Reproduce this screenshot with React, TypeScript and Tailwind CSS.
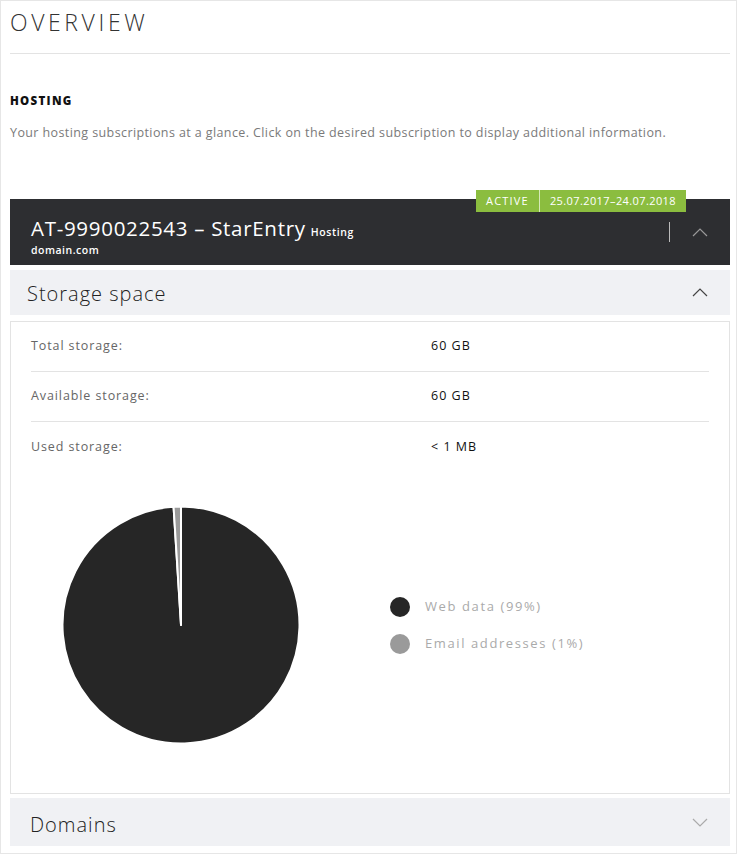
import React from "react";

function Pie() {
  const cx = 120, cy = 120, r = 118.5;
  const pt = (deg: number) => {
    const a = ((deg - 90) * Math.PI) / 180;
    return [cx + r * Math.cos(a), cy + r * Math.sin(a)];
  };
  const [x1, y1] = pt(0);
  const [x2, y2] = pt(356.4);
  const dark = `M${cx},${cy} L${x1},${y1} A${r},${r} 0 1 1 ${x2},${y2} Z`;
  const gray = `M${cx},${cy} L${x2},${y2} A${r},${r} 0 0 1 ${x1},${y1} Z`;
  return (
    <svg width="240" height="240" viewBox="0 0 240 240">
      <path d={dark} fill="#262626" stroke="#ffffff" strokeWidth="2" strokeLinejoin="round" />
      <path d={gray} fill="#9a9a9a" stroke="#ffffff" strokeWidth="2" strokeLinejoin="round" />
    </svg>
  );
}

function ChevronUp({ color }: { color: string }) {
  return (
    <svg width="16" height="9" viewBox="0 0 16 9" fill="none">
      <path d="M1 8 L8 1 L15 8" stroke={color} strokeWidth="1.2" />
    </svg>
  );
}
function ChevronDown({ color }: { color: string }) {
  return (
    <svg width="16" height="9" viewBox="0 0 16 9" fill="none">
      <path d="M1 1 L8 8 L15 1" stroke={color} strokeWidth="1.2" />
    </svg>
  );
}

export default function App() {
  const font = { fontFamily: "'Open Sans', Lato, sans-serif" };
  return (
    <div
      className="w-[737px] h-[854px] border border-[#e6e6e6] bg-white pl-[9px] pr-[6px] overflow-hidden"
      style={font}
    >
      <div className="pt-[7px] h-[53px] border-b border-[#e3e3e3]">
        <h1 className="text-[23px] font-light tracking-[3.6px] text-[#333] leading-[28px]">OVERVIEW</h1>
      </div>
      <div className="pt-[39px]">
        <h2 className="text-[11.5px] font-extrabold tracking-[1.3px] text-[#111] leading-[16px]">HOSTING</h2>
        <p className="mt-[16px] text-[12.5px] text-[#7a7a7a] leading-[16px] tracking-[0.4px]">
          Your hosting subscriptions at a glance. Click on the desired subscription to display additional information.
        </p>
      </div>

      <div className="mt-[58px] relative">
        <div className="absolute right-[44px] top-[-9px] flex h-[22px] bg-[#8bbd3f] text-white text-[11px] tracking-[0.4px]">
          <span className="px-[10px] flex items-center border-r border-[#d6e9b8] tracking-[1.2px]">ACTIVE</span>
          <span className="px-[10px] flex items-center">25.07.2017–24.07.2018</span>
        </div>
        <div className="h-[66px] bg-[#2d2e31] flex items-center pl-[21px] pr-[22px]">
          <div className="flex-1 pt-[10px]">
            <div className="text-white leading-[22px]">
              <span className="text-[20.5px] font-normal tracking-[0.7px]">AT-9990022543 – StarEntry</span>
              <span className="text-[10.5px] font-semibold ml-[5px] tracking-[0.6px]">Hosting</span>
            </div>
            <div className="text-white text-[10.5px] font-semibold leading-[14px] tracking-[0.5px]">domain.com</div>
          </div>
          <div className="w-px h-[20px] bg-[#bbbbbb] mr-[22px]" />
          <ChevronUp color="#9a9a9a" />
        </div>
      </div>

      <div className="mt-[5px] h-[45px] bg-[#f0f1f4] flex items-center pl-[17px] pr-[22px]">
        <span className="flex-1 text-[20px] font-light text-[#222] tracking-[1px] pt-[2px]">Storage space</span>
        <ChevronUp color="#444" />
      </div>

      <div className="mt-[6px] h-[473px] border border-[#e3e3e3] px-[20px]">
        {[
          ["Total storage:", "60 GB"],
          ["Available storage:", "60 GB"],
          ["Used storage:", "< 1 MB"],
        ].map(([k, v], i) => (
          <div
            key={k}
            className={`h-[50px] flex items-center ${i < 2 ? "border-b border-[#e3e3e3]" : ""}`}
          >
            <span className="w-[400px] text-[12.5px] text-[#666] tracking-[0.9px]">{k}</span>
            <span className="text-[12.5px] text-[#111] tracking-[1px]">{v}</span>
          </div>
        ))}
        <div className="flex items-center mt-[33px]">
          <div className="ml-[30px]">
            <Pie />
          </div>
          <div className="ml-[89px] flex flex-col gap-[17px]">
            <div className="flex items-center">
              <span className="w-[20px] h-[20px] rounded-full bg-[#262626]" />
              <span className="ml-[15px] text-[13px] text-[#aaa] tracking-[1.6px]">Web data (99%)</span>
            </div>
            <div className="flex items-center">
              <span className="w-[20px] h-[20px] rounded-full bg-[#9a9a9a]" />
              <span className="ml-[15px] text-[13px] text-[#aaa] tracking-[1.6px]">Email addresses (1%)</span>
            </div>
          </div>
        </div>
      </div>

      <div className="mt-[4px] h-[48px] bg-[#f0f1f4] flex items-center pl-[20px] pr-[22px]">
        <span className="flex-1 text-[20px] font-light text-[#222] tracking-[1px] pt-[5px]">Domains</span>
        <ChevronDown color="#aaa" />
      </div>
    </div>
  );
}
